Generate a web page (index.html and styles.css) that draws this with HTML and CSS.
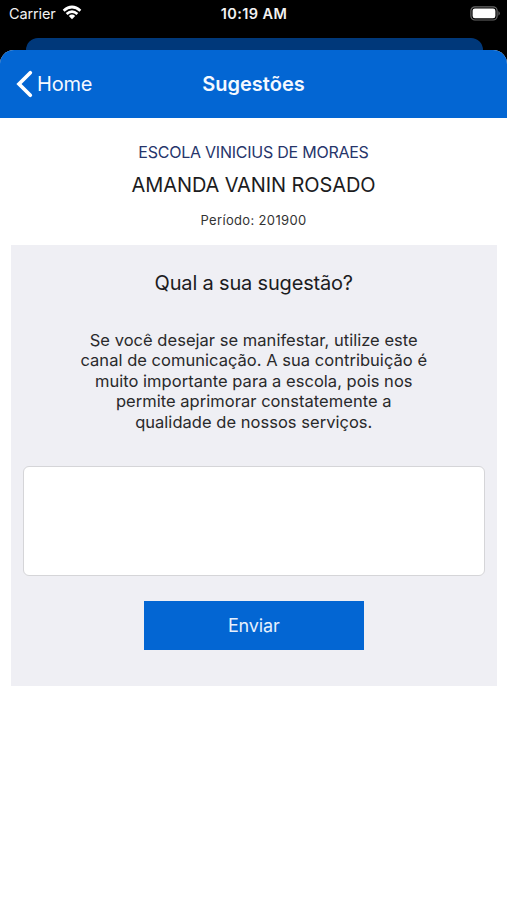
FILE: index.html
```
<!DOCTYPE html>
<html lang="pt-BR">
<head>
<meta charset="utf-8">
<title>Sugestões</title>
<link rel="stylesheet" href="styles.css">
</head>
<body>
<div class="screen">
  <div class="status">
    <div class="carrier"><span class="carrier-name">Carrier</span>
      <svg class="wifi" width="20" height="15" viewBox="0 0 20 15"><g fill="none" stroke="#fff" stroke-width="2.7"><path d="M1.6 5.7Q10 -1.7 18.4 5.7"/><path d="M4.6 9Q10 4.2 15.4 9"/></g><path d="M6.8 10.9Q10 8.2 13.2 10.9L10 14.2Z" fill="#fff"/></svg>
    </div>
    <span class="time">10:19 AM</span>
    <svg class="battery" width="31" height="15" viewBox="0 0 31 15"><rect x=".9" y=".8" width="26.2" height="13.2" rx="4" fill="none" stroke="#696969" stroke-width="1.2"/><rect x="2.6" y="2.5" width="22.8" height="9.8" rx="2.3" fill="#fff"/><path d="M28.5 5Q31 7.4 28.5 9.8Z" fill="#777"/></svg>
  </div>
  <div class="back-card"></div>
  <main class="sheet">
    <header class="nav">
      <a class="back"><svg width="17" height="28" viewBox="0 0 17 28"><path d="M14.3 2.8L3 14L14.3 25.2" fill="none" stroke="#fff" stroke-width="3.7" stroke-linecap="round" stroke-linejoin="miter"/></svg><span class="home">Home</span></a>
      <h1 class="title">Sugestões</h1>
    </header>
    <section class="student">
      <div class="school">ESCOLA VINICIUS DE MORAES</div>
      <div class="name">AMANDA VANIN ROSADO</div>
      <div class="period">Período: 201900</div>
    </section>
    <section class="panel">
      <h2 class="question">Qual a sua sugestão?</h2>
      <p class="message">Se você desejar se manifestar, utilize este<br>canal de comunicação. A sua contribuição é<br>muito importante para a escola, pois nos<br>permite aprimorar constatemente a<br>qualidade de nossos serviços.</p>
      <textarea class="field" aria-label="Sugestão"></textarea>
      <button class="send">Enviar</button>
    </section>
  </main>
</div>
</body>
</html>
```
FILE: styles.css
```
* { box-sizing: border-box; }
body { margin: 0; background: #000; font-family: Inter, "Liberation Sans", sans-serif; color: #1c1c1e; }
.screen { width: 507px; height: 900px; overflow: hidden; display: flex; flex-direction: column; }
.status { height: 37.5px; flex: none; padding: 0 6px 10px 9px; display: grid; grid-template-columns: 1fr auto 1fr; align-items: center; color: #f2f2f2; }
.carrier { display: flex; align-items: center; gap: 6px; font-size: 14.5px; letter-spacing: -.12px; line-height: 20px; }
.wifi { margin-top: -2px; }
.time { margin-right: 2px; font-size: 14.5px; font-weight: 600; letter-spacing: .4px; line-height: 20px; }
.battery { justify-self: end; margin-top: -1px; }
.back-card { flex: none; height: 12px; margin: 0 24.5px 0 25.5px; border-radius: 12px 12px 0 0; background: #00387a; }
.sheet { flex: 1; background: #fff; border-radius: 14px 14px 0 0; overflow: hidden; }
.nav { height: 68.5px; background: #0366d3; color: #f5f9ff; display: grid; grid-template-columns: 1fr auto 1fr; align-items: center; }
.back { display: flex; align-items: center; gap: 4px; padding-left: 16px; font-size: 20px; letter-spacing: -.2px; }
.title { margin: 0; font-size: 20px; font-weight: 600; line-height: 26px; }
.student { height: 127px; text-align: center; padding-top: 23px; }
.school { font-size: 16px; letter-spacing: -.24px; line-height: 22px; color: #26356b; }
.name { font-size: 20px; letter-spacing: -.1px; line-height: 28px; margin-top: 8px; }
.period { font-size: 13px; letter-spacing: .35px; line-height: 18px; margin-top: 12px; color: #333; }
.panel { height: 441px; margin: 0 10px 0 10.5px; padding: 23.5px 12px 0; background: #efeff4; display: flex; flex-direction: column; align-items: center; }
.question { margin: 0; font-size: 20px; letter-spacing: -.18px; font-weight: 400; line-height: 28px; }
.message { margin: 33px 0 0; height: 103px; font-size: 16.5px; letter-spacing: .03px; line-height: 20.5px; text-align: center; white-space: nowrap; color: #29292b; }
.field { width: 462px; height: 110px; flex: none; margin-top: 33px; border: 1.5px solid #d5d5d8; border-radius: 6px; background: #fff; resize: none; outline: 0; }
.send { width: 220px; height: 49px; flex: none; margin-top: 25px; padding: 0; border: 0; background: #0366d3; color: #e6f0fd; font: 400 18px/49px Inter, "Liberation Sans", sans-serif; letter-spacing: -.15px; }
```
